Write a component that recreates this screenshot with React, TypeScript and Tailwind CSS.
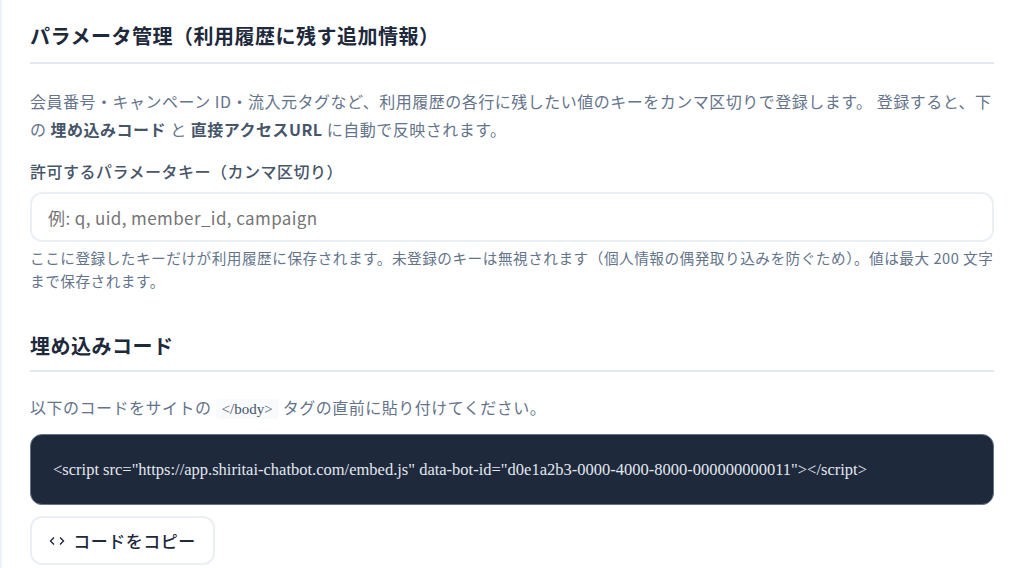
const sans = "font-['Noto_Sans_CJK_JP','Noto_Sans',sans-serif]";

export default function App() {
  return (
    <div className={`h-[568px] overflow-hidden bg-white border-l-2 border-[#eef2f8] pl-[28px] pr-[30px] pt-[21px] tracking-[0.5px] ${sans}`}>
      {/* パラメータ管理 */}
      <h2 className="text-[20px] leading-[30px] font-bold text-[#1e293b] border-b-2 border-[#e2e8f0] pb-[11px]">
        パラメータ管理（利用履歴に残す追加情報）
      </h2>
      <p className="mt-[23px] text-[16px] leading-[28px] text-[#64748b]">
        会員番号・キャンペーン ID・流入元タグなど、利用履歴の各行に残したい値のキーをカンマ区切りで登録します。 登録すると、下の <strong className="font-bold text-[#475569]">埋め込みコード</strong> と <strong className="font-bold text-[#475569]">直接アクセスURL</strong> に自動で反映されます。
      </p>
      <label className="block mt-[16px] text-[16px] leading-[24px] font-medium text-[#475569]">
        許可するパラメータキー（カンマ区切り）
      </label>
      <input
        className="block mt-[9px] w-full h-[50px] rounded-[12px] border-2 border-[#eaeff6] px-[16px] text-[17px] tracking-[0.4px] outline-none placeholder:text-[#757575]"
        placeholder="例: q, uid, member_id, campaign"
      />
      <p className="mt-[4px] text-[14.65px] leading-[23px] text-[#64748b]">
        ここに登録したキーだけが利用履歴に保存されます。未登録のキーは無視されます（個人情報の偶発取り込みを防ぐため）。値は最大 200 文字まで保存されます。
      </p>

      {/* 埋め込みコード */}
      <h2 className="mt-[39px] text-[20px] leading-[30px] font-bold text-[#1e293b] border-b-2 border-[#e2e8f0] pb-[9px]">
        埋め込みコード
      </h2>
      <p className="mt-[21px] text-[16px] leading-[29px] text-[#64748b]">
        以下のコードをサイトの <code className="font-['Liberation_Serif',serif] text-[15px] tracking-normal text-[#475569] bg-[#f8fafc] rounded-[4px] px-[6px] py-[2px]">&lt;/body&gt;</code> タグの直前に貼り付けてください。
      </p>
      <pre className="mt-[10px] h-[71px] flex items-center rounded-[12px] bg-[#1e293b] px-[22px] pt-[2px] border border-[#64748b] font-['Liberation_Serif',serif] text-[16.5px] tracking-normal text-[#e2e8f0]">
        {'<script src="https://app.shiritai-chatbot.com/embed.js" data-bot-id="d0e1a2b3-0000-4000-8000-000000000011"></script>'}
      </pre>
      <button className="mt-[11px] h-[49px] w-[185px] flex items-center justify-center gap-[8px] rounded-[12px] border-2 border-[#eaeff6] bg-white text-[17px] font-medium text-[#1e293b]">
        <svg width="16" height="16" viewBox="0 0 16 16" fill="none" stroke="#1e293b" strokeWidth="1.4">
          <path d="M5 4.5 1.5 8 5 11.5" />
          <path d="M11 4.5 14.5 8 11 11.5" />
        </svg>
        コードをコピー
      </button>
    </div>
  );
}
